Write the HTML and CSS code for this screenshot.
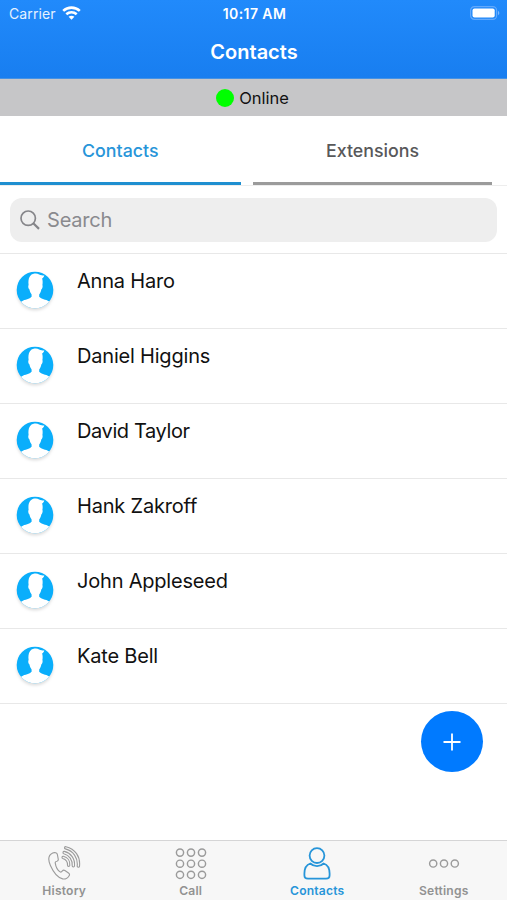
FILE: index.html
```html
<!DOCTYPE html>
<html lang="en">
<head>
<meta charset="utf-8">
<title>Contacts</title>
<link rel="stylesheet" href="styles.css">
</head>
<body>
<svg class="defs" aria-hidden="true">
  <symbol id="avatar" viewBox="0 0 38 38">
    <clipPath id="disc"><circle cx="19" cy="19" r="18.3"/></clipPath>
    <g clip-path="url(#disc)">
      <rect width="38" height="38" fill="#0aaefb"/>
      <path fill="#fff" d="M15.600 23.500C14.600 22 13.800 20.500 13.500 18.500c-1.100-.6-1.700-3.600-.9-4.600C11.800 7.500 13.900 3.200 18.500 2.600c2-.3 3.300.1 4.600.9 1.500.8 3.500 1 5.200 1-.3 1.400-1.200 2.400-2.200 2.900.7 2 .7 4.500.3 6.500.7 1-.1 4-1.100 4.600-.3 2-1.100 3.600-2.100 5v2.300c2 2.600 6.500 2.500 10 4.600l3 2V38H2v-5.600l3.600-2c3.500-2.100 8-2 10-4.600z"/>
    </g>
  </symbol>
</svg>
<div class="app">
  <header class="header">
    <div class="status">
      <div class="carrier"><span>Carrier</span>
        <svg class="wifi" viewBox="0 0 19 14"><g fill="none" stroke="#fff" stroke-width="2.6"><path d="M1.200 4.900C5.900.5 13.100.5 17.800 4.900"/><path d="M4.300 8.300c3-2.700 7.400-2.700 10.400 0"/></g><path fill="#fff" d="M6.600 10.700c1.700-1.400 4.100-1.400 5.800 0L9.500 13.700z"/></svg>
      </div>
      <div class="time">10:17 AM</div>
      <svg class="battery" viewBox="0 0 30 14"><rect x=".6" y=".6" width="26" height="12.800" rx="3.800" fill="none" stroke="#62a9fc" stroke-width="1.200"/><rect x="2.500" y="2.500" width="22.200" height="9" rx="2" fill="#fff"/><path d="M28 4.800c1.800.7 1.800 3.700 0 4.400z" fill="#7db9ff"/></svg>
    </div>
    <h1 class="title">Contacts</h1>
  </header>
  <div class="presence"><i class="dot"></i><span>Online</span></div>
  <nav class="tabs">
    <a class="tab active"><span>Contacts</span></a>
    <a class="tab"><span>Extensions</span></a>
  </nav>
  <div class="search-wrap">
    <div class="search">
      <svg viewBox="0 0 20 20"><g fill="none" stroke="#858589" stroke-width="1.700"><circle cx="8.200" cy="8.200" r="7.200"/><path d="M13.300 13.300l5.700 5.600" stroke-width="2.200"/></g></svg>
      <span>Search</span>
    </div>
  </div>
  <main class="list">
    <div class="row"><svg class="avatar"><use href="#avatar"/></svg><span>Anna Haro</span></div>
    <div class="row"><svg class="avatar"><use href="#avatar"/></svg><span>Daniel Higgins</span></div>
    <div class="row"><svg class="avatar"><use href="#avatar"/></svg><span class="tight">David Taylor</span></div>
    <div class="row"><svg class="avatar"><use href="#avatar"/></svg><span>Hank Zakroff</span></div>
    <div class="row"><svg class="avatar"><use href="#avatar"/></svg><span>John Appleseed</span></div>
    <div class="row"><svg class="avatar"><use href="#avatar"/></svg><span>Kate Bell</span></div>
    <div class="add"><svg viewBox="0 0 18 18"><path d="M9 .5v17M.5 9h17" stroke="#fff" stroke-width="1.800"/></svg></div>
  </main>
  <nav class="bar">
    <a class="item">
      <svg viewBox="0 0 36 36"><g fill="none" stroke="#9b9b9b" stroke-width="1.100" stroke-linejoin="round" stroke-linecap="round"><path d="M6.700 6.900C2.600 8.800 1.800 13.500 4.400 19.500c3.100 7 7.600 12.300 12.300 13.400 2.800.5 5.700-1.200 6.700-3.700.4-1-.1-1.600-.9-2.200l-3.600-2.500c-1-.7-1.900-.4-2.500.4-.7 1-1.500 1.500-2.300 1-2.600-1.900-4.400-5.600-4.900-9.100-.1-1 .5-1.400 1.700-1.600 1-.2 1.500-.9 1.400-1.900l-.9-4.700c-.3-1.700-2.600-2.500-4.700-1.700z"/><path d="M17.300 10.200c4.300 1 7 4.700 6.500 9.300-.2 1.200-2.300 1.200-2.300-.2.200-3.300-1.600-5.900-4.700-6.800-1.400-.5-.9-2.500.5-2.300z"/><path d="M18.300 5.400c6.700 1.600 10.900 7.400 10.200 14.600-.2 1.300-2.300 1.300-2.300-.2.500-5.800-2.900-10.700-8.400-12.100-1.400-.4-.9-2.500.5-2.300z"/><path d="M19.900.7c9.200 2.100 14.700 10 13.600 19.600-.2 1.300-2.400 1.200-2.300-.3.900-8.200-4-15.200-11.800-17.100-1.500-.4-.9-2.500.5-2.200z"/></g></svg>
      <span>History</span></a>
    <a class="item">
      <svg viewBox="0 0 36 36"><g fill="none" stroke="#9b9b9b" stroke-width="1.450"><circle cx="7" cy="6.600" r="3.600"/><circle cx="18" cy="6.600" r="3.600"/><circle cx="29" cy="6.600" r="3.600"/><circle cx="7" cy="17.700" r="3.600"/><circle cx="18" cy="17.700" r="3.600"/><circle cx="29" cy="17.700" r="3.600"/><circle cx="7" cy="28.800" r="3.600"/><circle cx="18" cy="28.800" r="3.600"/><circle cx="29" cy="28.800" r="3.600"/></g></svg>
      <span>Call</span></a>
    <a class="item current">
      <svg viewBox="0 0 36 36"><g fill="none" stroke="#2795d9" stroke-width="1.800" stroke-linejoin="round"><circle cx="18" cy="9.600" r="7.400"/><path d="M11.300 17.500C7.200 18.800 5.400 23.300 5.400 27.600v1.600c0 2.400 1.300 3.400 3.500 3.400h18.200c2.200 0 3.500-1 3.500-3.400v-1.600c0-4.300-1.800-8.800-5.900-10.100-3.700 3.500-9.700 3.500-13.400 0z"/></g></svg>
      <span>Contacts</span></a>
    <a class="item">
      <svg viewBox="0 0 36 36"><g fill="none" stroke="#9b9b9b" stroke-width="1.450"><circle cx="7.200" cy="17.500" r="3.600"/><circle cx="18" cy="17.500" r="3.600"/><circle cx="28.800" cy="17.500" r="3.600"/></g></svg>
      <span>Settings</span></a>
  </nav>
</div>
</body>
</html>
```
FILE: styles.css
```css
* { box-sizing: border-box; }
body { margin: 0; background: #fff; font-family: Inter, "Liberation Sans", sans-serif; color: #111; }
.defs { position: absolute; width: 0; height: 0; }
.app { width: 507px; height: 900px; display: flex; flex-direction: column; overflow: hidden; }
.header { height: 79px; background: linear-gradient(#218afb, #187ef0); color: #fff; border-bottom: 1px solid #4592e4; }
.status { height: 27px; padding: 0 7px 0 9px; display: grid; grid-template-columns: 1fr auto 1fr; align-items: center; font-size: 14px; line-height: 27px; }
.carrier { display: flex; align-items: center; gap: 6px; color: #e5f1ff; letter-spacing: .1px; }
.wifi { width: 19px; height: 14px; margin-top: -1px; }
.time { font-weight: 600; font-size: 14px; letter-spacing: .4px; }
.battery { width: 30px; height: 14px; justify-self: end; margin-top: -1px; }
.title { margin: 0; height: 51px; line-height: 51px; padding-left: 1px; text-align: center; font-size: 20px; font-weight: 600; }
.presence { height: 37px; background: #c6c6c8; display: flex; align-items: center; justify-content: center; gap: 5px; padding: 0 2px 0 0; font-size: 16.500px; }
.dot { width: 18px; height: 18px; border-radius: 50%; background: #0f0; }
.tabs { height: 70px; display: grid; grid-template-columns: 240.500px 239px; column-gap: 12.500px; border-bottom: 1px solid #ededed; }
.tab { height: 69px; padding-top: 3px; border-bottom: 3px solid #9b9b9b; display: flex; align-items: center; justify-content: center; color: #58585a; font-size: 17.800px; font-weight: 500; }
.tab.active { border-color: #1e8fd0; color: #2795d9; }
.search-wrap { height: 67px; padding: 12px 10px 11px; }
.search { height: 44px; background: #eee; border-radius: 12px; display: flex; align-items: center; gap: 7px; padding-left: 10px; color: #8a8a8e; font-size: 20px; letter-spacing: -.2px; }
.search svg { width: 20px; height: 20px; }
.list { flex: 1; position: relative; border-top: 1px solid #e8e8e8; }
.row { height: 75px; border-bottom: 1px solid #e8e8e8; display: flex; align-items: flex-start; gap: 23px; padding: 17px 0 0 16px; font-size: 20px; line-height: 20px; letter-spacing: -.2px; }
.row .tight { letter-spacing: -.4px; }
.avatar { width: 38px; height: 38px; filter: drop-shadow(0 2px 1.500px #0002); }
.add { position: absolute; left: 421px; top: 457px; width: 62px; height: 61px; border-radius: 50%; background: #007aff; display: flex; align-items: center; justify-content: center; }
.add svg { width: 18px; height: 18px; }
.bar { height: 60px; border-top: 1px solid #d5d5d6; background: #f7f7f7; display: grid; grid-template-columns: repeat(4, 1fr); padding-left: 1px; }
.item { display: flex; flex-direction: column; align-items: center; padding-top: 5px; color: #929292; font-size: 12.100px; font-weight: 600; line-height: 15px; letter-spacing: .2px; gap: 1px; }
.item svg { width: 36px; height: 36px; }
.item.current { color: #2795d9; }
```
